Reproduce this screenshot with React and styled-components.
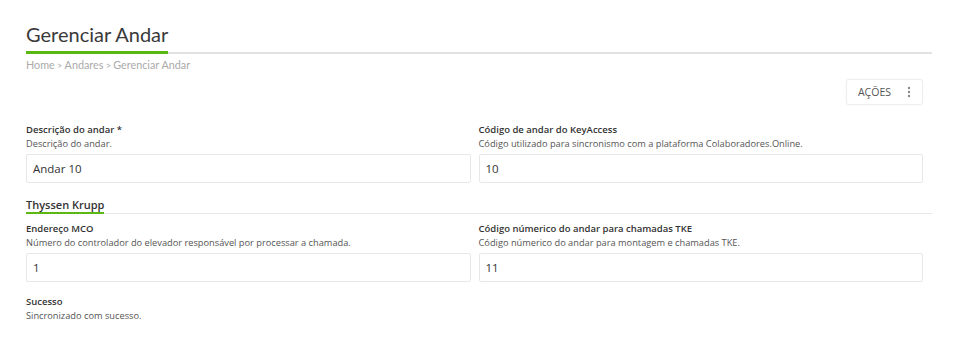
import styled, { createGlobalStyle } from 'styled-components'

const Global = createGlobalStyle`
  body {
    margin: 0;
    background: #fff;
    font-family: "Open Sans", "Liberation Sans", sans-serif;
    color: #333;
  }
`

const Page = styled.div`
  padding: 20px 27px 0 26px;
`

const Header = styled.div`
  display: flex;
  border-bottom: 2px solid #e2e2e2;
`

const Title = styled.h1`
  margin: 0 0 -2px;
  padding-bottom: 2px;
  border-bottom: 3px solid #5bb711;
  font-family: Lato, "Open Sans", sans-serif;
  font-weight: 400;
  font-size: 20px;
  line-height: 29px;
  color: #3a3a3a;
`

const Crumbs = styled.div`
  margin-top: 4px;
  font-family: Lato, "Open Sans", sans-serif;
  font-size: 10.8px;
  line-height: 14px;
  color: #aaa;
  span + span::before {
    content: ' > ';
    font-size: 9px;
  }
`

const Actions = styled.div`
  display: flex;
  justify-content: flex-end;
  margin-top: 6px;
  padding-right: 9px;
`

const ActionButton = styled.button`
  display: flex;
  align-items: center;
  gap: 16px;
  height: 26px;
  padding: 0 11px;
  background: #fff;
  border: 1px solid #eee;
  border-radius: 3px;
  box-shadow: 0 0 2px rgba(0, 0, 0, 0.06);
  font-family: "Open Sans", sans-serif;
  font-size: 10.5px;
  color: #555;
`

const Grid = styled.div`
  display: grid;
  grid-template-columns: 1fr 1fr;
  column-gap: 8px;
  row-gap: ${p => p.$rowGap || 0}px;
  margin-top: ${p => p.$top}px;
  padding-right: 9px;
`

const Field = styled.div`
  display: flex;
  flex-direction: column;
`

const Label = styled.div`
  font-size: 9.5px;
  font-weight: 600;
  line-height: 14px;
  color: #333;
`

const Hint = styled.div`
  font-size: 9.25px;
  line-height: 13px;
  color: #555;
`

const Input = styled.div`
  box-sizing: border-box;
  height: 29px;
  margin-top: 4px;
  padding: 0 6px;
  display: flex;
  align-items: center;
  border: 1px solid #e8e8e8;
  border-radius: 2px;
  font-size: 11.5px;
  color: #333;
`

const Section = styled.div`
  display: flex;
  margin-top: 15px;
  border-bottom: 1px solid #e8e8e8;
`

const SectionTitle = styled.div`
  margin-bottom: -1px;
  font-size: 11px;
  font-weight: 600;
  line-height: 14px;
  color: #333;
  border-bottom: 2px solid #5bb711;
`

const Dots = () => (
  <svg width="4" height="12" viewBox="0 0 4 12">
    <circle cx="2" cy="2" r="1.2" fill="#888" />
    <circle cx="2" cy="6" r="1.2" fill="#888" />
    <circle cx="2" cy="10" r="1.2" fill="#888" />
  </svg>
)

const FormField = ({ label, hint, value }) => (
  <Field>
    <Label>{label}</Label>
    <Hint>{hint}</Hint>
    {value !== undefined && <Input>{value}</Input>}
  </Field>
)

export default function App() {
  return (
    <Page>
      <Global />
      <Header>
        <Title>Gerenciar Andar</Title>
      </Header>
      <Crumbs>
        <span>Home</span>
        <span>Andares</span>
        <span>Gerenciar Andar</span>
      </Crumbs>
      <Actions>
        <ActionButton>
          AÇÕES
          <Dots />
        </ActionButton>
      </Actions>
      <Grid $top={18}>
        <FormField label="Descrição do andar *" hint="Descrição do andar." value="Andar 10" />
        <FormField
          label="Código de andar do KeyAccess"
          hint="Código utilizado para sincronismo com a plataforma Colaboradores.Online."
          value="10"
        />
      </Grid>
      <Section>
        <SectionTitle>Thyssen Krupp</SectionTitle>
      </Section>
      <Grid $top={8} $rowGap={13}>
        <FormField
          label="Endereço MCO"
          hint="Número do controlador do elevador responsável por processar a chamada."
          value="1"
        />
        <FormField
          label="Código númerico do andar para chamadas TKE"
          hint="Código númerico do andar para montagem e chamadas TKE."
          value="11"
        />
        <FormField label="Sucesso" hint="Sincronizado com sucesso." />
      </Grid>
    </Page>
  )
}
